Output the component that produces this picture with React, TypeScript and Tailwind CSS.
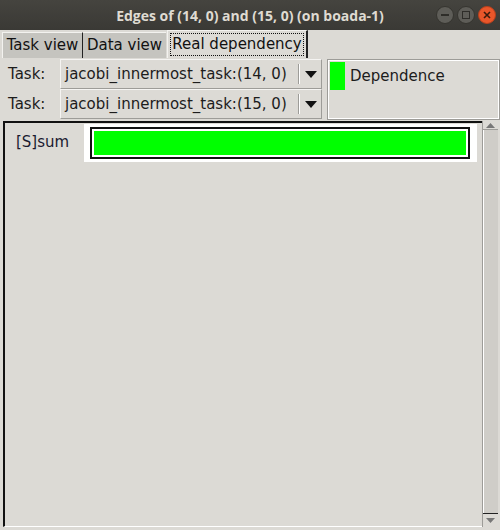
const font = { fontFamily: '"DejaVu Sans", "Liberation Sans", sans-serif' };

function TitleButton({ close, children }: { close?: boolean; children: React.ReactNode }) {
  return (
    <div
      className={
        "w-[18px] h-[18px] rounded-full flex items-center justify-center border " +
        (close
          ? "bg-[#e9562a] border-[#b8401c] text-[#3a1a0c]"
          : "bg-[#5e5d58] border-[#35342f] text-[#2e2d29]")
      }
    >
      {children}
    </div>
  );
}

function Combo({ value }: { value: string }) {
  return (
    <div className="flex-1 h-[30px] flex items-stretch bg-[#dcdad5] border-t border-l border-t-[#f5f4f2] border-l-[#f5f4f2] border-b border-r border-b-[#9d9c98] border-r-[#9d9c98]">
      <div className="flex-1 flex items-center pl-[4px] text-[15px] text-[#1c1c1c]">{value}</div>
      <div className="w-[1px] my-[4px] bg-[#9d9c98]" />
      <div className="w-[1px] my-[4px] bg-white" />
      <div className="w-[21px] flex items-center justify-center">
        <svg width="12" height="7" viewBox="0 0 12 7">
          <polygon points="0,0 12,0 6,7" fill="#111" />
        </svg>
      </div>
    </div>
  );
}

export default function App() {
  return (
    <div className="w-[500px] h-[530px] bg-[#dcdad5] overflow-hidden flex flex-col" style={font}>
      {/* title bar */}
      <div className="h-[30px] shrink-0 relative flex items-center justify-center bg-gradient-to-b from-[#45443f] to-[#3a3935]">
        <span className="text-[14px] font-bold text-[#dfdbd2] font-['Open_Sans',sans-serif]">
          Edges of (14, 0) and (15, 0) (on boada-1)
        </span>
        <div className="absolute right-[4px] top-[6px] flex gap-[3px]">
          <TitleButton>
            <div className="w-[8px] h-[2px] bg-[#2e2d29]" />
          </TitleButton>
          <TitleButton>
            <div className="w-[8px] h-[8px] border border-[#2e2d29]" />
          </TitleButton>
          <TitleButton close>
            <svg width="8" height="8" viewBox="0 0 8 8">
              <path d="M1 1 L7 7 M7 1 L1 7" stroke="#3a1a0c" strokeWidth="1.6" />
            </svg>
          </TitleButton>
        </div>
      </div>

      {/* tabs */}
      <div className="h-[28px] shrink-0 flex items-end pl-[2px] text-[15px] text-[#111]">
        <div className="h-[26px] w-[81px] bg-[#c5c4bf] border-t border-l border-t-[#f3f2ef] border-l-[#f3f2ef] border-r border-r-[#222] flex items-center justify-center">
          Task view
        </div>
        <div className="h-[26px] w-[83px] bg-[#c5c4bf] border-t border-t-[#f3f2ef] flex items-center justify-center">
          Data view
        </div>
        <div className="h-[28px] w-[141px] ml-[1px] bg-[#dcdad5] border-t border-l border-t-[#f3f2ef] border-l-[#f3f2ef] border-r-2 border-r-[#222] p-[2px]">
          <div className="h-full border border-dotted border-[#111] flex items-center justify-center">Real dependency</div>
        </div>
      </div>

      {/* selectors + legend */}
      <div className="shrink-0 flex pt-[1px] text-[15px] text-[#1c1c1c]">
        <div className="w-[322px] flex flex-col">
          <div className="flex items-center h-[30px]">
            <div className="w-[60px] pl-[8px]">Task:</div>
            <Combo value="jacobi_innermost_task:(14, 0)" />
          </div>
          <div className="flex items-center h-[30px]">
            <div className="w-[60px] pl-[8px]">Task:</div>
            <Combo value="jacobi_innermost_task:(15, 0)" />
          </div>
        </div>
        <div className="ml-[5px] flex-1 h-[61px] border border-[#9d9c98] outline outline-1 outline-white -outline-offset-2 p-[2px] flex items-start">
          <div className="w-[15px] h-[28px] bg-[#00ff00]" />
          <div className="ml-[5px] pt-[3px]">Dependence</div>
        </div>
      </div>

      {/* canvas + scrollbar */}
      <div className="flex-1 flex mt-[1px] ml-[3px] mr-[2px] mb-[3px] min-h-0">
        <div className="flex-1 border-t-2 border-l-2 border-t-[#111] border-l-[#111] border-b border-b-white pt-[1px] pr-[5px]">
          <div className="flex h-[38px]">
            <div className="w-[79px] flex items-center pl-[11px] pb-[2px] text-[15px] text-[#1a1a30]">[S]sum</div>
            <div className="flex-1 bg-white pl-[6px] pr-[7px] py-[3px]">
              <div className="h-full border-2 border-[#111] p-[2px] bg-white">
                <div className="h-full bg-[#00ff00]" />
              </div>
            </div>
          </div>
        </div>
        <div className="w-[16px] flex flex-col border-l border-[#9d9c98] bg-[#cfcdc8]">
          <div className="h-[9px] flex items-center justify-center border-b border-[#9d9c98] bg-[#dcdad5]">
            <svg width="9" height="5" viewBox="0 0 9 5">
              <polygon points="0,5 9,5 4.5,0" fill="#777" />
            </svg>
          </div>
          <div className="flex-1 border-l border-white" />
          <div className="h-[14px] flex items-center justify-center border-t border-[#222] bg-[#dcdad5]">
            <svg width="9" height="5" viewBox="0 0 9 5">
              <polygon points="0,0 9,0 4.5,5" fill="#777" />
            </svg>
          </div>
        </div>
      </div>
    </div>
  );
}
